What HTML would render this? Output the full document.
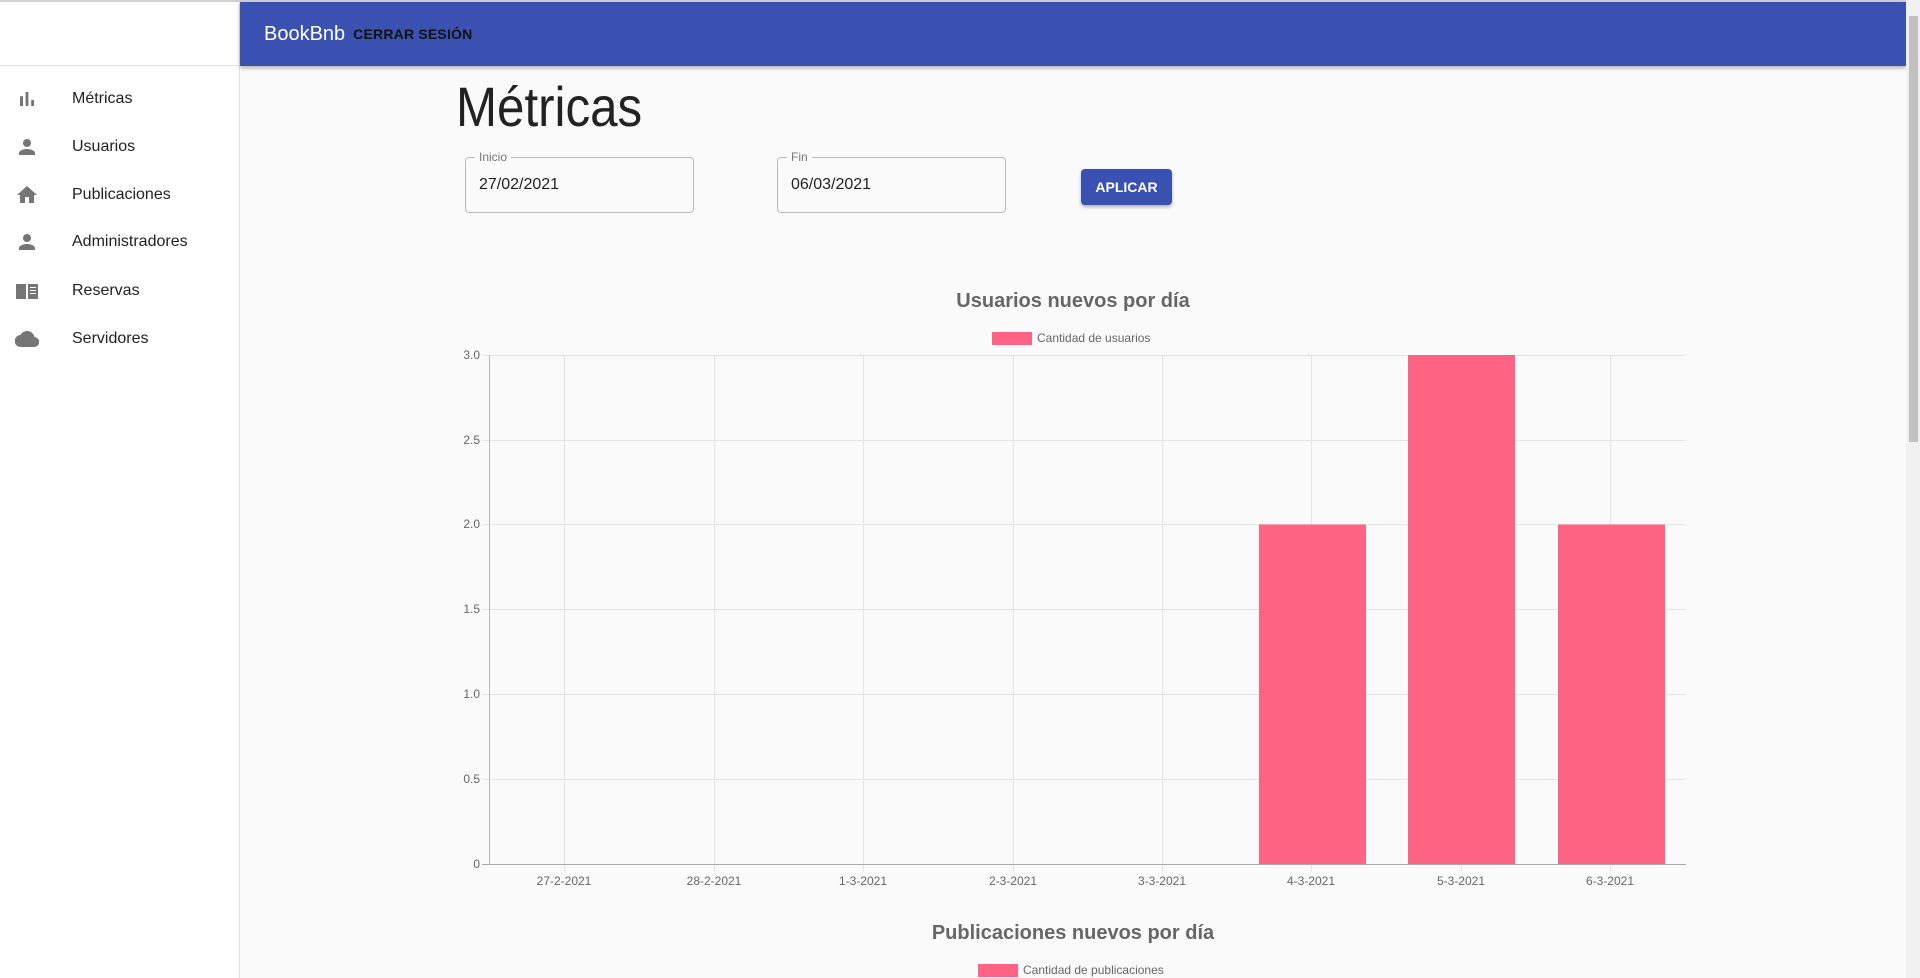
<!DOCTYPE html>
<html><head><meta charset="utf-8"><style>
*{box-sizing:border-box;margin:0;padding:0}
body{width:1920px;height:978px;overflow:hidden;background:#fafafa;font-family:"Liberation Sans",sans-serif;position:relative}
.topline{position:absolute;left:0;top:0;width:1906px;height:2px;background:#d0d0d0}
.side{position:absolute;left:0;top:2px;width:240px;height:976px;background:#fff;border-right:1px solid #e0e0e0}
.side .hd{height:64px;border-bottom:1px solid #e0e0e0}
.item{position:absolute;left:0;width:239px;height:48px;display:flex;align-items:center}
.item svg{position:absolute;left:15px;width:24px;height:24px;fill:#757575}
.item span{position:absolute;left:72px;font-size:16px;color:#222}
.bar{position:absolute;left:240px;top:2px;width:1666px;height:64px;background:#3a51b1;box-shadow:0 2px 4px rgba(0,0,0,.3);display:flex;align-items:center}
.bar .b{color:#fff;font-size:20px;margin-left:24px}
.bar .c{color:#111;font-size:14px;font-weight:bold;margin-left:8px;letter-spacing:.2px}
h1{position:absolute;left:456px;top:74px;font-size:56px;font-weight:normal;color:#222;transform:scaleX(0.88);transform-origin:left}
.fld{position:absolute;top:157px;width:229px;height:56px;border:1px solid #bbb;border-radius:4px}
.fld label{position:absolute;left:9px;top:-8px;background:#fafafa;padding:0 4px;font-size:12px;color:#777}
.fld div{position:absolute;left:13px;top:18px;font-size:16px;color:#222}
.btn{position:absolute;left:1081px;top:169px;width:91px;height:36px;background:#3a51b1;color:#fff;border-radius:4px;font-size:14px;font-weight:bold;display:flex;align-items:center;justify-content:center;box-shadow:0 2px 3px rgba(0,0,0,.3)}
.scroll{position:absolute;left:1906px;top:0;width:14px;height:978px;background:#f1f1f1}
.thumb{position:absolute;left:1909px;top:16px;width:9px;height:426px;background:#c1c1c1}
</style></head><body>
<div class="topline"></div>
<div class="side"><div class="hd"></div></div>
<div class="item" style="top:75px"><svg viewBox="0 0 24 24"><path d="M5 9.2h3V19H5zM10.6 5h2.8v14h-2.8zm5.6 8H19v6h-2.8z"/></svg><span>Métricas</span></div>
<div class="item" style="top:123px"><svg viewBox="0 0 24 24"><path d="M12 12c2.2 0 4-1.8 4-4s-1.8-4-4-4-4 1.8-4 4 1.8 4 4 4zm0 2c-2.7 0-8 1.3-8 4v2h16v-2c0-2.7-5.3-4-8-4z"/></svg><span>Usuarios</span></div>
<div class="item" style="top:171px"><svg viewBox="0 0 24 24"><path d="M10 20v-6h4v6h5v-8h3L12 3 2 12h3v8z"/></svg><span>Publicaciones</span></div>
<div class="item" style="top:218px"><svg viewBox="0 0 24 24"><path d="M12 12c2.2 0 4-1.8 4-4s-1.8-4-4-4-4 1.8-4 4 1.8 4 4 4zm0 2c-2.7 0-8 1.3-8 4v2h16v-2c0-2.7-5.3-4-8-4z"/></svg><span>Administradores</span></div>
<div class="item" style="top:267px"><svg viewBox="0 0 24 24"><path d="M1 5h10v15H1zM13 5h10v15H13z"/><path d="M15 8h6v1h-6zm0 3h6v1h-6zm0 3h6v1h-6z" fill="#fff"/></svg><span>Reservas</span></div>
<div class="item" style="top:315px"><svg viewBox="0 0 24 24"><path d="M19.4 10A7.5 7.5 0 0 0 5.4 8 6 6 0 0 0 6 20h13a5 5 0 0 0 .4-10z"/></svg><span>Servidores</span></div>
<div class="bar"><span class="b">BookBnb</span><span class="c">CERRAR SESIÓN</span></div>
<h1>Métricas</h1>
<div class="fld" style="left:465px"><label>Inicio</label><div>27/02/2021</div></div>
<div class="fld" style="left:777px"><label>Fin</label><div>06/03/2021</div></div>
<div class="btn">APLICAR</div>
<svg style="position:absolute;left:0;top:0" width="1906" height="978" font-family="Liberation Sans, sans-serif">
<text x="1073" y="307" text-anchor="middle" font-size="20" font-weight="bold" fill="#666">Usuarios nuevos por día</text>
<rect x="992" y="332" width="40" height="13" fill="#ff6384"/>
<text x="1037" y="342" font-size="12" fill="#666">Cantidad de usuarios</text>
<g stroke="#e4e4e4" stroke-width="1">
<line x1="482" y1="355.5" x2="1686" y2="355.5"/><line x1="482" y1="440.5" x2="1686" y2="440.5"/><line x1="482" y1="524.5" x2="1686" y2="524.5"/><line x1="482" y1="609.5" x2="1686" y2="609.5"/><line x1="482" y1="694.5" x2="1686" y2="694.5"/><line x1="482" y1="779.5" x2="1686" y2="779.5"/>
<line x1="564.5" y1="355" x2="564.5" y2="872"/><line x1="714.5" y1="355" x2="714.5" y2="872"/><line x1="863.5" y1="355" x2="863.5" y2="872"/><line x1="1013.5" y1="355" x2="1013.5" y2="872"/><line x1="1162.5" y1="355" x2="1162.5" y2="872"/><line x1="1311.5" y1="355" x2="1311.5" y2="872"/><line x1="1461.5" y1="355" x2="1461.5" y2="872"/><line x1="1610.5" y1="355" x2="1610.5" y2="872"/>
</g>
<rect x="1259" y="524.5" width="107" height="340" fill="#ff6384"/>
<rect x="1408" y="355" width="107" height="509.5" fill="#ff6384"/>
<rect x="1558" y="524.5" width="107" height="340" fill="#ff6384"/>
<line x1="489.5" y1="355" x2="489.5" y2="864" stroke="#bbb"/>
<line x1="482" y1="864.5" x2="1686" y2="864.5" stroke="#aaa"/>
<g font-size="12" fill="#666" text-anchor="end">
<text x="480" y="359">3.0</text><text x="480" y="444">2.5</text><text x="480" y="528">2.0</text><text x="480" y="613">1.5</text><text x="480" y="698">1.0</text><text x="480" y="783">0.5</text><text x="480" y="868">0</text>
</g>
<g font-size="12" fill="#666" text-anchor="middle">
<text x="564" y="885">27-2-2021</text><text x="714" y="885">28-2-2021</text><text x="863" y="885">1-3-2021</text><text x="1013" y="885">2-3-2021</text><text x="1162" y="885">3-3-2021</text><text x="1311" y="885">4-3-2021</text><text x="1461" y="885">5-3-2021</text><text x="1610" y="885">6-3-2021</text>
</g>
<text x="1073" y="939" text-anchor="middle" font-size="20" font-weight="bold" fill="#666">Publicaciones nuevos por día</text>
<rect x="978" y="964" width="40" height="13" fill="#ff6384"/>
<text x="1023" y="974" font-size="12" fill="#666">Cantidad de publicaciones</text>
</svg>
<div class="scroll"></div><div class="thumb"></div>
</body></html>
